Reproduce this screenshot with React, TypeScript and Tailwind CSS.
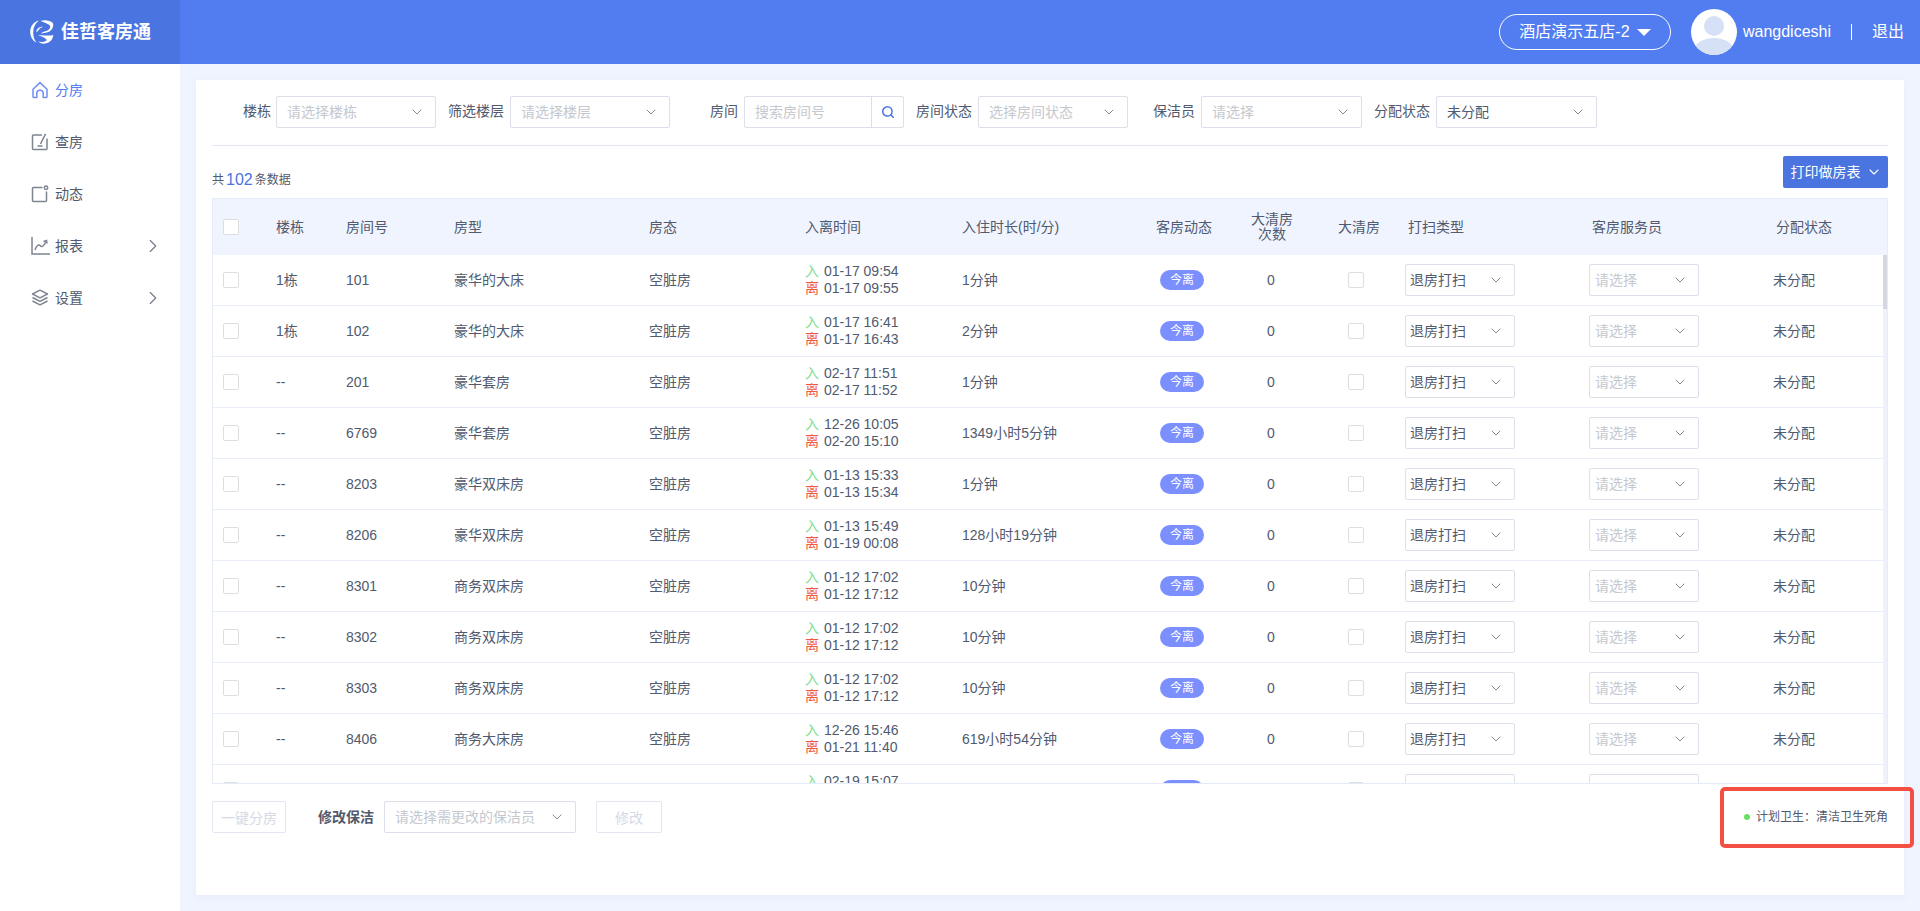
import { ChevronDown, ChevronRight, Search } from "lucide-react";

const GRID =
  "grid grid-cols-[64px_70px_108px_195px_156px_157px_168px_106px_72px_96px_185px_184px_1fr]";

const rooms = [
  ["1栋", "101", "豪华的大床", "01-17 09:54", "01-17 09:55", "1分钟"],
  ["1栋", "102", "豪华的大床", "01-17 16:41", "01-17 16:43", "2分钟"],
  ["--", "201", "豪华套房", "02-17 11:51", "02-17 11:52", "1分钟"],
  ["--", "6769", "豪华套房", "12-26 10:05", "02-20 15:10", "1349小时5分钟"],
  ["--", "8203", "豪华双床房", "01-13 15:33", "01-13 15:34", "1分钟"],
  ["--", "8206", "豪华双床房", "01-13 15:49", "01-19 00:08", "128小时19分钟"],
  ["--", "8301", "商务双床房", "01-12 17:02", "01-12 17:12", "10分钟"],
  ["--", "8302", "商务双床房", "01-12 17:02", "01-12 17:12", "10分钟"],
  ["--", "8303", "商务双床房", "01-12 17:02", "01-12 17:12", "10分钟"],
  ["--", "8406", "商务大床房", "12-26 15:46", "01-21 11:40", "619小时54分钟"],
  ["--", "8407", "豪华套房", "02-19 15:07", "02-19 15:08", "1分钟"],
];

const HomeIcon = () => (
  <svg width="18" height="18" viewBox="0 0 18 18" fill="none" stroke="#6f8ff2" strokeWidth="1.5">
    <path d="M2 8.200 9 1.600l7 6.600v7.200a1.200 1.200 0 0 1-1.200 1.200h-2.600v-4.200a3.200 3.200 0 0 0-6.400 0v4.200H3.200A1.200 1.200 0 0 1 2 15.400z" strokeLinejoin="round" />
  </svg>
);

const CheckIcon = () => (
  <svg width="18" height="18" viewBox="0 0 18 18" fill="none" stroke="#7d8591" strokeWidth="1.5">
    <path d="M11 2H2.500a1 1 0 0 0-1 1v12.500a1 1 0 0 0 1 1h12.500a1 1 0 0 0 1-1V5.500" />
    <path d="M14.500.8 9.500 11M6.500 13h5" />
  </svg>
);

const ChatIcon = () => (
  <svg width="18" height="18" viewBox="0 0 18 18" fill="none" stroke="#7d8591" strokeWidth="1.5">
    <path d="M11.500 2.500H2.500a1 1 0 0 0-1 1v12a1 1 0 0 0 1 1h12a1 1 0 0 0 1-1v-9" />
    <circle cx="15" cy="2.800" r="1.700" />
  </svg>
);

const ChartIcon = () => (
  <svg width="19" height="18" viewBox="0 0 19 18" fill="none" stroke="#7d8591" strokeWidth="1.5">
    <path d="M1 0v17h18" />
    <path d="M4 13c1-3 2.500-5 4-5 1.500 0 1.500 2 3 1.500S14 6.500 15 4.500" />
    <path d="M12.500 4.500 15.500 3.500l.6 3" />
  </svg>
);

const LayersIcon = () => (
  <svg width="18" height="18" viewBox="0 0 18 18" fill="none" stroke="#7d8591" strokeWidth="1.5" strokeLinejoin="round">
    <path d="M9 1.200 16.500 5 9 8.800 1.500 5z" />
    <path d="M1.500 8.500 9 12.300l7.500-3.800M1.500 12 9 15.800l7.500-3.800" />
  </svg>
);

const Logo = () => (
  <svg width="24" height="24" viewBox="0 0 24 24" fill="#fff">
    <path d="M9 .6C3.800 1.800.2 6.200.2 11.800c0 4.800 2.300 8.800 6.200 10.800-2.200-2.800-3.200-6.200-3.200-10C3.200 7.400 5.300 3.200 9 .6z" />
    <path d="M10.500 1c4.500-1.400 9.500-.6 12.500 2.200.9 3.600-.8 7.300-4.600 8.800-2.600 1-5.300.9-7.700 1.700 2.200-2.400 6.800-2.500 8.700-4.800 1.200-1.500.9-3.300-.7-4.300C16 3 13 2 10.500 1z" />
    <path d="M6.300 12.200c.2-3.400 3-5.600 6.700-5.400-2 .9-3.500 1.700-4.300 3.100-.6 1-1.400 1.700-2.400 2.300z" />
    <path d="M8 15.600c4.400-1 9.800.8 15.300-.6-.5 4.300-3 7.300-7 8.300-3.200.8-6.200.1-8.300-1.700 3.300.9 6.700.5 8.900-1.700-2.200-2.400-5.400-3.700-8.900-4.300z" />
  </svg>
);

const Avatar = () => (
  <svg width="46" height="46" viewBox="0 0 46 46">
    <clipPath id="avatar-clip">
      <circle cx="23" cy="23" r="23" />
    </clipPath>
    <circle cx="23" cy="23" r="23" fill="#fff" />
    <circle cx="23" cy="17" r="10" fill="#d6e0f6" />
    <ellipse cx="23" cy="42" rx="20" ry="13" fill="#d6e0f6" clipPath="url(#avatar-clip)" />
  </svg>
);

const navItems = [
  { label: "分房", icon: <HomeIcon />, active: true },
  { label: "查房", icon: <CheckIcon /> },
  { label: "动态", icon: <ChatIcon /> },
  { label: "报表", icon: <ChartIcon />, more: true },
  { label: "设置", icon: <LayersIcon />, more: true },
];

const Select = ({
  value,
  placeholder,
  className,
}: {
  value?: string;
  placeholder?: string;
  className: string;
}) => (
  <div
    className={`flex h-8 shrink-0 items-center justify-between rounded-[2px] border border-[#dcdfe9] bg-white pl-[10px] pr-[10px] ${className}`}
  >
    <span className={`pt-[1px] ${value ? "text-[#515a6e]" : "text-[#c5c8ce]"}`}>{value || placeholder}</span>
    <ChevronDown size={16} strokeWidth={1.3} className="text-[#707786]" />
  </div>
);

const Box = () => (
  <span className="block h-4 w-4 rounded-[2px] border border-[#dcdee2] bg-white" />
);

export default function App() {
  return (
    <div className="flex h-[911px] flex-col overflow-hidden bg-[#f0f4fe] text-[14px] text-[#515a6e] font-['Liberation_Sans','Noto_Sans_CJK_SC',sans-serif]">
      <header className="flex h-16 shrink-0 items-center bg-[#527df0] text-white">
        <div className="flex h-full w-[180px] items-center gap-[7px] bg-[#4a75e0] pl-[30px]">
          <Logo />
          <span className="text-[18px] font-bold">佳哲客房通</span>
        </div>
        <div className="ml-auto flex items-center pr-[16px] text-[16px]">
          <div className="flex h-9 w-[172px] items-center justify-center gap-[7px] rounded-full border border-white">
            <span>酒店演示五店-2</span>
            <span className="mt-[1px] h-0 w-0 border-x-[7px] border-t-[7px] border-x-transparent border-t-white" />
          </div>
          <span className="ml-5 flex"><Avatar /></span>
          <span className="ml-[6px]">wangdiceshi</span>
          <span className="ml-5 h-4 w-px bg-white" />
          <span className="ml-5">退出</span>
        </div>
      </header>

      <div className="flex min-h-0 flex-1">
        <aside className="w-[180px] shrink-0 bg-white">
          {navItems.map((item) => (
            <div
              key={item.label}
              className={`flex h-[52px] items-center pl-[31px] pr-5 ${item.active ? "text-[#527df0]" : "text-[#515a6e]"}`}
            >
              <span className="flex w-[24px]">{item.icon}</span>
              <span>{item.label}</span>
              {item.more && <ChevronRight size={22} strokeWidth={1.2} className="ml-auto -mr-[4px] text-[#707786]" />}
            </div>
          ))}
        </aside>

        <main className="relative min-w-0 flex-1 p-4">
          <div className="flex h-[815px] flex-col bg-white px-4 shadow-[0_2px_8px_rgba(120,140,200,0.08)]">
            <div className="flex h-[66px] shrink-0 items-center border-b border-[#e4e7f2] pb-[2px]">
              <span className="ml-[31px] mr-[5px]">楼栋</span>
              <Select placeholder="请选择楼栋" className="w-40" />
              <span className="ml-3 mr-[6px] w-[56px]">筛选楼层</span>
              <Select placeholder="请选择楼层" className="w-40" />
              <span className="ml-10 mr-[6px]">房间</span>
              <div className="flex h-8 w-[160px] shrink-0 overflow-hidden rounded-[2px] border border-[#dcdfe9]">
                <span className="flex-1 pl-[10px] leading-[31px] text-[#c5c8ce]">搜索房间号</span>
                <span className="flex w-8 items-center justify-center border-l border-[#dcdfe9]">
                  <Search size={14} strokeWidth={2.6} className="text-[#4a75e0]" />
                </span>
              </div>
              <span className="ml-3 mr-[6px]">房间状态</span>
              <Select placeholder="选择房间状态" className="w-[150px]" />
              <span className="ml-[25px] mr-[6px]">保洁员</span>
              <Select placeholder="请选择" className="w-[161px]" />
              <span className="ml-3 mr-[6px]">分配状态</span>
              <Select value="未分配" className="w-[161px]" />
            </div>

            <div className="flex h-[52px] shrink-0 items-center justify-between pt-[10px]">
              <div className="flex items-center pt-[6px] text-[12px] text-[#515a6e]">
                共<span className="mx-[2px] text-[16px] text-[#4a75e0]">102</span>条数据
              </div>
              <div className="flex h-8 w-[105px] items-center justify-center gap-[5px] self-start rounded-[2px] bg-[#4a75e0] pl-px text-white">
                打印做房表
                <ChevronDown size={16} strokeWidth={1.6} />
              </div>
            </div>

            <div className="relative h-[586px] shrink-0 overflow-hidden border border-[#e6ebfa]">
              <div className={`${GRID} -ml-px h-[56px] items-center bg-[#f0f4fe]`}>
                <span className="pl-[11px]"><Box /></span>
                <span>楼栋</span>
                <span>房间号</span>
                <span>房型</span>
                <span>房态</span>
                <span>入离时间</span>
                <span>入住时长(时/分)</span>
                <span className="pl-[2px] text-center">客房动态</span>
                <span className="text-center leading-[15px]">大清房<br />次数</span>
                <span className="pl-[30px]">大清房</span>
                <span className="pl-1">打扫类型</span>
                <span className="pl-[3px]">客房服务员</span>
                <span className="pl-[3px]">分配状态</span>
              </div>
              <div className="mr-[4px]">
                {rooms.map((room) => (
                  <div key={room[1]} className={`${GRID} -ml-px h-[51px] items-center border-b border-[#ebeefa]`}>
                    <span className="pl-[11px]"><Box /></span>
                    <span>{room[0]}</span>
                    <span>{room[1]}</span>
                    <span>{room[2]}</span>
                    <span>空脏房</span>
                    <div className="leading-[17px]">
                      <div><span className="mr-[1px] text-[#7be08f]">入</span> {room[3]}</div>
                      <div><span className="mr-[1px] text-[#f2593f]">离</span> {room[4]}</div>
                    </div>
                    <span>{room[5]}</span>
                    <span className="ml-[30px] flex h-5 w-11 items-center justify-center rounded-full bg-[#7b8ffe] text-[12px] text-white">今离</span>
                    <span className="pr-[2px] text-center">0</span>
                    <span className="pl-[40px]"><Box /></span>
                    <Select value="退房打扫" className="ml-px w-[110px] !pl-1" />
                    <Select placeholder="请选择" className="w-[110px] !pl-[5px]" />
                    <span>未分配</span>
                  </div>
                ))}
              </div>
              <span className="absolute right-0 top-[56px] bottom-0 w-[4px] bg-[#f0f2fb]" />
              <span className="absolute right-0 top-[56px] h-[54px] w-[4px] bg-[#d5d8e0]" />
            </div>

            <div className="mt-[17px] flex items-center">
              <span className="flex h-8 w-[74px] items-center justify-center rounded-[2px] border border-[#e4e7f2] pt-[3px] text-[#d5d9e6]">一键分房</span>
              <span className="ml-[32px] mr-[10px] font-bold text-[#515a6e]">修改保洁</span>
              <Select placeholder="请选择需更改的保洁员" className="w-[192px]" />
              <span className="ml-[20px] flex h-8 w-[66px] items-center justify-center rounded-[2px] border border-[#e4e7f2] pt-[3px] text-[#d5d9e6]">修改</span>
              <span className="ml-auto flex items-center gap-[6px] text-[12px] text-[#515a6e]">
                <span className="h-[6px] w-[6px] rounded-full bg-[#69e05f]" />
                计划卫生：清洁卫生死角
              </span>
            </div>
          </div>
          <span className="absolute right-[6px] top-[723px] h-[61px] w-[194px] rounded-[5px] border-[4px] border-[#f44f42]" />
        </main>
      </div>
    </div>
  );
}
